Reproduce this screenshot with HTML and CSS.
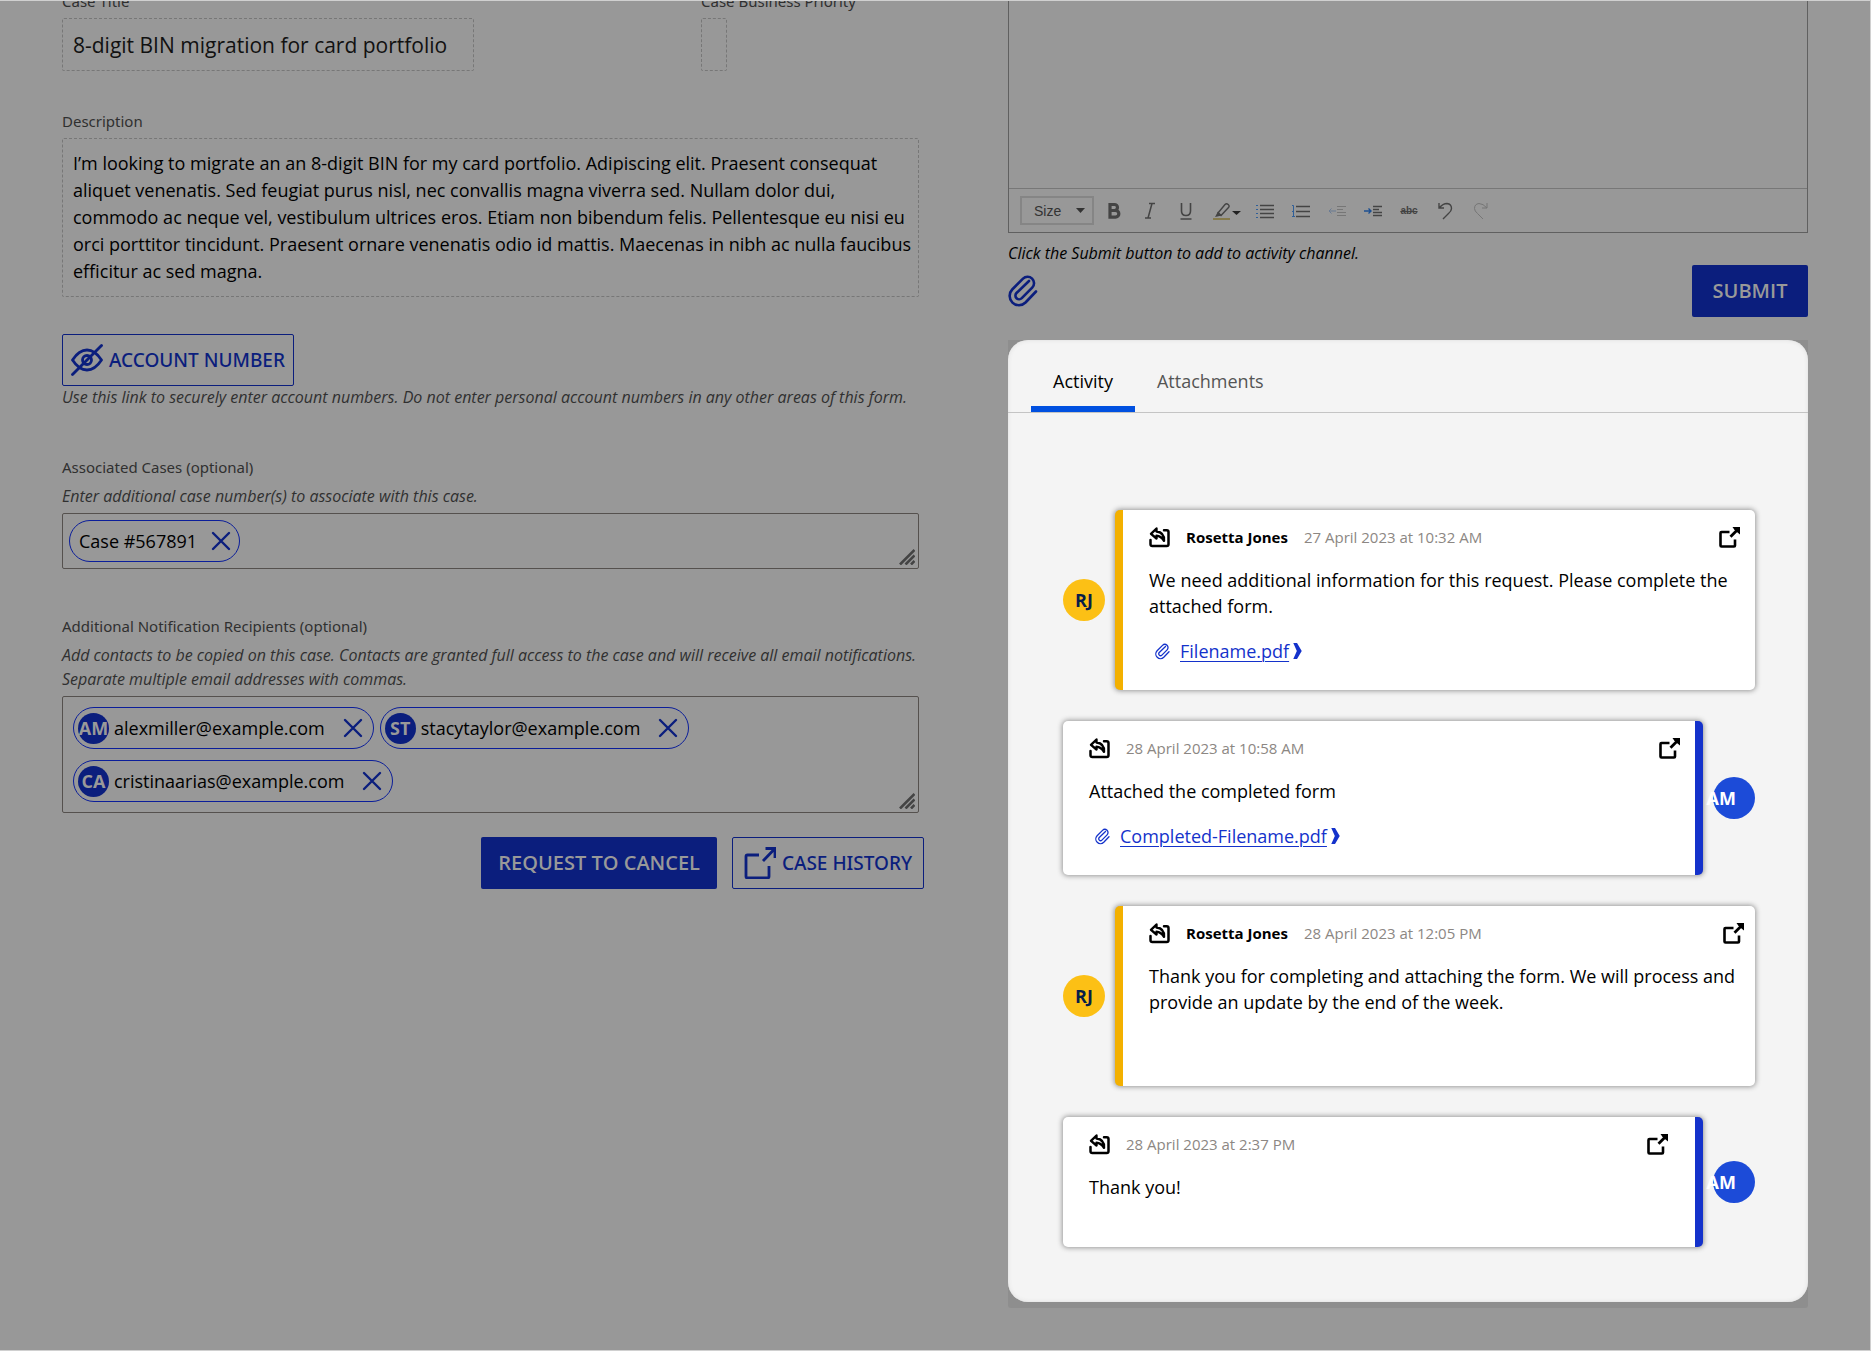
FILE: index.html
```html
<!DOCTYPE html>
<html lang="en">
<head>
<meta charset="utf-8">
<meta name="viewport" content="width=device-width, initial-scale=1">
<title>Case details</title>
<link rel="stylesheet" href="styles.css">
</head>
<body>
<svg class="sprite" aria-hidden="true">
  <symbol id="clip" viewBox="0 0 30 32"><path d="M28 16.500 17.500 27.500A9.300 9.300 0 0 1 4.200 14.500L15 3.700a6.400 6.400 0 0 1 9.200 9L13.800 23.200a3.700 3.700 0 0 1-5.300-5.200L21 6" fill="none" stroke="currentColor" stroke-width="2.600" stroke-linecap="round" stroke-linejoin="round"/></symbol>
  <symbol id="close" viewBox="0 0 20 20"><path d="M2 2 18 18M18 2 2 18" fill="none" stroke="currentColor" stroke-width="2.400" stroke-linecap="round"/></symbol>
  <symbol id="grip" viewBox="0 0 16 16"><path d="M1 15.500 15.500 1M6.500 15.500 15.500 6.500M12 15.500 15.500 12" fill="none" stroke="currentColor" stroke-width="2.600"/></symbol>
  <symbol id="reply" viewBox="0 0 21 21"><path d="M15 3.200h2.700q1.800 0 1.800 1.800v12.200q0 1.800-1.800 1.800H3.300q-1.800 0-1.800-1.800V13" fill="none" stroke="currentColor" stroke-width="2.500" stroke-linecap="round"/><path d="M7.500 1.500 2 6.800l5.500 4.700V8.800q4.500.2 7.500 5 .6-8.300-7.500-9.300z" fill="none" stroke="currentColor" stroke-width="2.400" stroke-linejoin="round"/></symbol>
  <symbol id="open" viewBox="0 0 21 21"><path d="M10.500 5H2.500q-1 0-1 1v12.500q0 1 1 1H15q1 0 1-1V12.500" fill="none" stroke="currentColor" stroke-width="2.600"/><path d="M11.500 9.800 18 3.300" stroke="currentColor" stroke-width="2.800"/><path d="M13.500 0h7.500v7.500l-2.500-2L15.200 2.500z" fill="currentColor"/></symbol>
  <symbol id="chevron" viewBox="0 0 9 17"><path d="M0 0h4l5 8.500L4 17H0l3.800-8.500z" fill="currentColor"/></symbol>
</svg>
<main class="page">
  <form class="case">
    <div class="row">
      <div class="field field--title">
        <label for="title">Case Title</label>
        <input id="title" class="readonly readonly--title" readonly value="8-digit BIN migration for card portfolio">
      </div>
      <div class="field">
        <label for="priority">Case Business Priority</label>
        <input id="priority" class="readonly readonly--empty" readonly>
      </div>
    </div>
    <div class="field field--description">
      <label for="description">Description</label>
      <textarea id="description" class="readonly readonly--text" readonly rows="5">I’m looking to migrate an an 8-digit BIN for my card portfolio. Adipiscing elit. Praesent consequat aliquet venenatis. Sed feugiat purus nisl, nec convallis magna viverra sed. Nullam dolor dui, commodo ac neque vel, vestibulum ultrices eros. Etiam non bibendum felis. Pellentesque eu nisi eu orci porttitor tincidunt. Praesent ornare venenatis odio id mattis. Maecenas in nibh ac nulla faucibus efficitur ac sed magna.</textarea>
    </div>
    <div class="account">
      <button type="button" class="btn btn--outline"><svg class="icon-lg" viewBox="0 0 32 32" fill="none" stroke="currentColor" stroke-width="2.800" stroke-linecap="round" stroke-linejoin="round"><path d="M1.500 16Q8 6 16 6t14.500 10Q24 26 16 26T1.500 16z"/><circle cx="16" cy="16" r="4.500"/><path d="M1.500 30.500 30.500 1.500"/></svg>ACCOUNT NUMBER</button>
      <p class="hint">Use this link to securely enter account numbers. Do not enter personal account numbers in any other areas of this form.</p>
    </div>
    <fieldset class="group">
      <legend>Associated Cases (optional)</legend>
      <p class="hint">Enter additional case number(s) to associate with this case.</p>
      <div class="chips chips--single">
        <span class="chip chip--plain">Case #567891<button type="button" class="chip-x" aria-label="Remove case"><svg><use href="#close"/></svg></button></span>
        <svg class="grip"><use href="#grip"/></svg>
      </div>
    </fieldset>
    <fieldset class="group">
      <legend>Additional Notification Recipients (optional)</legend>
      <p class="hint">Add contacts to be copied on this case. Contacts are granted full access to the case and will receive all email notifications. Separate multiple email addresses with commas.</p>
      <div class="chips chips--people">
        <span class="chip"><b class="badge">AM</b>alexmiller@example.com<button type="button" class="chip-x" aria-label="Remove alexmiller"><svg><use href="#close"/></svg></button></span>
        <span class="chip"><b class="badge">ST</b>stacytaylor@example.com<button type="button" class="chip-x" aria-label="Remove stacytaylor"><svg><use href="#close"/></svg></button></span>
        <span class="chip"><b class="badge">CA</b>cristinaarias@example.com<button type="button" class="chip-x" aria-label="Remove cristinaarias"><svg><use href="#close"/></svg></button></span>
        <svg class="grip"><use href="#grip"/></svg>
      </div>
    </fieldset>
    <div class="actions">
      <button type="button" class="btn btn--solid">REQUEST TO CANCEL</button>
      <button type="button" class="btn btn--outline"><svg class="icon-lg" viewBox="0 0 32 32" fill="none" stroke="currentColor" stroke-width="2.800"><path d="M15 8H3.500Q2 8 2 9.500v20Q2 31 3.500 31h20q1.500 0 1.500-1.500V19" /><path d="M19 14 30.500 2M21.500 1.500H31V11"/></svg>CASE HISTORY</button>
    </div>
  </form>

  <section class="side">
    <div class="editor">
      <div class="editor-body" contenteditable="true" role="textbox" aria-label="Comment"></div>
      <div class="toolbar">
        <button type="button" class="size">Size<svg viewBox="0 0 9 5"><path d="M0 0h9L4.500 5z" fill="currentColor"/></svg></button>
        <button type="button" class="tool" aria-label="Bold"><svg viewBox="0 0 18 18"><path d="M5 2.500h4.500a3 3 0 0 1 0 6H5zM5 8.500h5.500a3.300 3.300 0 0 1 0 6.700H5z" fill="none" stroke="currentColor" stroke-width="3.200"/></svg></button>
        <button type="button" class="tool" aria-label="Italic"><svg viewBox="0 0 18 18"><path d="M8 1.500h6M4 16h6M11 1.500 7 16" fill="none" stroke="currentColor" stroke-width="1.500"/></svg></button>
        <button type="button" class="tool" aria-label="Underline"><svg viewBox="0 0 18 18"><path d="M4.500 1v8q0 4.500 4.500 4.500T13.500 9V1M3.500 17h11" fill="none" stroke="currentColor" stroke-width="1.600"/></svg></button>
        <button type="button" class="tool tool--wide" aria-label="Highlight colour"><svg viewBox="0 0 28 18"><path d="m5 11 7-8.500q1.500-1.500 3.200 0t.3 3L8 13.500z" fill="none" stroke="currentColor" stroke-width="1.400"/><path d="M5 9.500 9 13.500 2 15z" fill="currentColor"/><path d="M0 17h17" stroke="#857a4c" stroke-width="2"/><path d="M19 9h9l-4.500 4z" fill="#222"/></svg></button>
        <button type="button" class="tool" aria-label="Bulleted list"><svg viewBox="0 0 18 18"><path d="M4 3.500h14M4 7.500h14M4 11.500h14M4 15.500h14" stroke="currentColor" stroke-width="1.300"/><path d="M0 3.500h2M0 7.500h2M0 11.500h2M0 15.500h2" stroke="#2f5f99"/></svg></button>
        <button type="button" class="tool" aria-label="Numbered list"><svg viewBox="0 0 18 18"><path d="M4 4.500h14M4 9.500h14M4 14.500h14" stroke="currentColor" stroke-width="1.600"/><path d="M0 3.500h1.500v11M0 9.500h2M0 14.500h3" fill="none" stroke="#2f5f99"/></svg></button>
        <button type="button" class="tool tool--off" aria-label="Outdent"><svg viewBox="0 0 18 18"><path d="M9 4.500h9M9 7.500h6M9 10.500h9M9 13.500h9" stroke="#555"/><path d="M8 9H1M3.500 6.500 1 9l2.500 2.500" fill="none" stroke="#3d6090"/></svg></button>
        <button type="button" class="tool" aria-label="Indent"><svg viewBox="0 0 18 18"><path d="M9 4.500h9M9 7.500h6M9 10.500h9M9 13.500h9" stroke="currentColor" stroke-width="1.700"/><path d="M0 9h7M4.500 6.500 7 9l-2.500 2.500" fill="none" stroke="#1c4f91" stroke-width="1.400"/></svg></button>
        <button type="button" class="tool tool--strike" aria-label="Strikethrough"><s>abc</s></button>
        <button type="button" class="tool" aria-label="Undo"><svg viewBox="0 0 18 18"><path d="M3 1v5h5M3 6q4-4.500 8-4.500 4.500.5 4.500 5 0 2.500-3 5L7 17" fill="none" stroke="currentColor" stroke-width="1.400"/></svg></button>
        <button type="button" class="tool tool--off" aria-label="Redo"><svg viewBox="0 0 18 18"><path d="M15 1v5h-5M15 6q-4-4.500-8-4.500Q2.500 2 2.500 6.500q0 2.500 3 5L11 17" fill="none" stroke="#555"/></svg></button>
      </div>
    </div>
    <p class="hint hint--dark">Click the Submit button to add to activity channel.</p>
    <div class="submit-row">
      <button type="button" class="attach" aria-label="Attach a file"><svg><use href="#clip"/></svg></button>
      <button type="button" class="btn btn--solid">SUBMIT</button>
    </div>
    <div class="panel-back">
      <div class="panel">
        <div class="tabs" role="tablist">
          <button type="button" role="tab" aria-selected="true" class="tab tab--on">Activity</button>
          <button type="button" role="tab" aria-selected="false" class="tab">Attachments</button>
        </div>
        <div class="messages">
          <article class="message message--in">
            <b class="avatar avatar--in">RJ</b>
            <div class="card">
              <header class="card-head"><button type="button" class="icon" aria-label="Reply"><svg><use href="#reply"/></svg></button><strong>Rosetta Jones</strong><time>27 April 2023 at 10:32 AM</time><button type="button" class="icon icon--open" aria-label="Open"><svg><use href="#open"/></svg></button></header>
              <p>We need additional information for this request. Please complete the attached form.</p>
              <div class="file"><svg class="file-clip"><use href="#clip"/></svg><a href="#file">Filename.pdf</a><svg class="file-arrow"><use href="#chevron"/></svg></div>
            </div>
          </article>
          <article class="message message--out">
            <div class="card">
              <header class="card-head"><button type="button" class="icon" aria-label="Reply"><svg><use href="#reply"/></svg></button><time>28 April 2023 at 10:58 AM</time><button type="button" class="icon icon--open" aria-label="Open"><svg><use href="#open"/></svg></button></header>
              <p>Attached the completed form</p>
              <div class="file"><svg class="file-clip"><use href="#clip"/></svg><a href="#file">Completed-Filename.pdf</a><svg class="file-arrow"><use href="#chevron"/></svg></div>
            </div>
            <b class="avatar avatar--out">AM</b>
          </article>
          <article class="message message--in">
            <b class="avatar avatar--in">RJ</b>
            <div class="card card--tall">
              <header class="card-head card-head--wide"><button type="button" class="icon" aria-label="Reply"><svg><use href="#reply"/></svg></button><strong>Rosetta Jones</strong><time>28 April 2023 at 12:05 PM</time><button type="button" class="icon icon--open" aria-label="Open"><svg><use href="#open"/></svg></button></header>
              <p>Thank you for completing and attaching the form. We will process and provide an update by the end of the week.</p>
            </div>
          </article>
          <article class="message message--out">
            <div class="card">
              <header class="card-head card-head--narrow"><button type="button" class="icon" aria-label="Reply"><svg><use href="#reply"/></svg></button><time>28 April 2023 at 2:37 PM</time><button type="button" class="icon icon--open" aria-label="Open"><svg><use href="#open"/></svg></button></header>
              <p>Thank you!</p>
            </div>
            <b class="avatar avatar--out">AM</b>
          </article>
        </div>
      </div>
    </div>
  </section>
</main>
</body>
</html>
```
FILE: styles.css
```css
* { box-sizing: border-box; }
body {
  margin: 0;
  min-height: 100vh;
  display: flex;
  border: solid #d0d0d0;
  border-width: 1px 1px 1px 0;
  background: #989898;
  color: #000;
  font: 18px/26px "Open Sans", "Noto Sans", sans-serif;
}
p, fieldset { margin: 0; padding: 0; border: 0; min-width: 0; }
button { margin: 0; padding: 0; border: 0; background: none; color: inherit; font: inherit; cursor: pointer; }
svg { display: block; flex: none; }
.sprite { display: none; }
.page {
  flex: 1;
  display: grid;
  grid-template-columns: minmax(0, 857fr) minmax(0, 800fr);
  gap: 89px;
  padding: 0 62px 42px;
  overflow: hidden;
  align-items: start;
}

/* Case form */
.case { display: flex; flex-direction: column; margin-top: -12px; }
.row { display: flex; gap: 227px; margin-bottom: 38px; }
.field { display: flex; flex-direction: column; gap: 5px; min-width: 0; }
.field--title { flex: 0 1 412px; }
.field--description { margin-bottom: 37px; }
label, legend { padding: 0; color: #303030; font: 15px/24px "Noto Sans", "Open Sans", sans-serif; }
.readonly {
  width: 100%;
  margin: 0;
  padding: 11px 10px;
  border: 1px dashed #777;
  border-radius: 2px;
  background: none;
  color: #000;
  font: inherit;
}
.readonly--title { height: 53px; color: #111; font-size: 21px; }
.readonly--empty { width: 26px; height: 53px; }
.readonly--text { display: block; height: 159px; padding-right: 6px; line-height: 27px; resize: none; overflow: hidden; }
.hint { color: #303030; font-size: 16px; line-height: 24px; font-style: italic; }
.hint--dark { margin-top: 8px; color: #000; }
.account { margin-bottom: 46px; }
.account .hint { margin-top: -1px; }
.btn {
  display: inline-flex;
  align-items: center;
  justify-content: center;
  gap: 6px;
  height: 52px;
  border-radius: 2px;
  white-space: nowrap;
}
.btn--outline {
  padding: 0 8px;
  border: 1px solid #0b1e7d;
  color: #0b1e7d;
  font: 500 19px/26px "Noto Sans", "Open Sans", sans-serif;
}
.btn--solid { padding: 0 17px; background: #0b1e7d; color: #999; font-size: 20px; font-weight: 600; }
.account .btn { display: flex; }
.icon-lg { width: 32px; height: 32px; }
.group { margin-bottom: 45px; }
.group:last-of-type { margin-bottom: 24px; }
legend { margin-bottom: 5px; }
.chips {
  position: relative;
  display: flex;
  flex-wrap: wrap;
  margin-top: 5px;
  border: 1px solid #55514e;
  border-radius: 2px;
}
.chips--single { padding: 6px; }
.chips--people { gap: 11px 6px; padding: 10px; }
.chip {
  display: inline-flex;
  align-items: center;
  gap: 5px;
  height: 42px;
  padding: 0 10px 0 4px;
  border: 1px solid #0b1e9a;
  border-radius: 21px;
}
.chip--plain { padding: 0 8px 0 9px; }
.chip-x { margin-left: 13px; color: #0b1e7d; }
.chip--plain .chip-x { margin-left: 9px; }
.chip-x svg { width: 20px; height: 20px; }
.badge {
  display: flex;
  align-items: center;
  justify-content: center;
  width: 31px;
  height: 31px;
  border-radius: 50%;
  background: #0b1e7d;
  color: #999;
  font-weight: 700;
}
.grip { position: absolute; right: 3px; bottom: 3px; width: 16px; height: 16px; color: #444; }
.actions { display: flex; justify-content: flex-end; gap: 15px; margin-right: -5px; }
.actions .btn--outline { min-width: 192px; }

/* Comment editor */
.editor { border: solid #606060; border-width: 0 1px 1px; }
.editor-body { height: 188px; border-bottom: 1px solid #777; }
.toolbar { display: flex; align-items: center; gap: 18px; height: 43px; padding: 0 11px; color: #444; }
.size {
  display: flex;
  align-items: center;
  justify-content: space-between;
  width: 74px;
  height: 29px;
  margin-right: -7px;
  padding: 0 7px 0 12px;
  border: 2px solid #858585;
  color: #333;
  font: 14px/20px "Liberation Sans", Arial, sans-serif;
}
.size svg { width: 9px; height: 5px; }
.tool svg { width: 18px; height: 18px; }
.tool--wide { margin-right: -3px; }
.tool--wide svg { width: 28px; }
.tool--off { opacity: .5; }
.tool--strike { width: 18px; font: bold 10px/18px "Liberation Sans", Arial, sans-serif; }
.submit-row { display: flex; justify-content: space-between; align-items: center; margin-bottom: 23px; }
.submit-row .btn { min-width: 116px; }
.attach { color: #0b1e7d; }
.attach svg { width: 30px; height: 32px; }

/* Activity panel */
.panel-back { padding-bottom: 6px; border-radius: 0 0 3px 3px; background: #8e8e8e; }
.panel { border-radius: 20px; background: #f4f4f4; box-shadow: inset 0 0 4px #ddd; }
.tabs { display: flex; padding: 0 23px; border-bottom: 1px solid #c4c4c4; }
.tab { height: 72px; padding: 16px 22px 0; border-bottom: 6px solid transparent; color: #555; }
.tab--on { border-color: #0050e0; color: #000; }
.messages { display: flex; flex-direction: column; gap: 31px; padding: 97px 53px 55px 55px; }
.message { display: flex; align-items: center; gap: 10px; }
.card {
  flex: 1;
  min-width: 0;
  min-height: 130px;
  padding: 15px 15px 26px 26px;
  border-radius: 5px;
  background: #fff;
  box-shadow: 0 0 5px 1px #999;
}
.card--tall { min-height: 180px; }
.message--in .card { border-left: 8px solid #f3b000; }
.message--out .card { border-right: 8px solid #1432cb; }
.avatar {
  display: flex;
  flex: none;
  align-items: center;
  width: 42px;
  height: 42px;
  border-radius: 50%;
  font-weight: 700;
}
.avatar--in { justify-content: center; background: #fcc015; color: #061d49; }
.avatar--out { justify-content: flex-end; padding-right: 19px; background: #1c4bd8; color: #fff; }
.card-head { display: flex; align-items: center; gap: 16px; margin-bottom: 18px; font-size: 15px; line-height: 24px; }
.card-head--wide { margin-right: -4px; }
.card-head--narrow { margin-right: 12px; }
.card-head time { color: #8c8783; }
.icon svg { width: 21px; height: 21px; }
.icon--open { margin-left: auto; }
.file { display: flex; align-items: center; gap: 10px; margin-top: 19px; padding-left: 6px; color: #1432cb; }
.file a { color: inherit; text-underline-offset: 3px; text-decoration-thickness: 1px; }
.file-clip { width: 15px; height: 17px; }
.file-arrow { width: 9px; height: 16px; margin-left: -6px; }
```
